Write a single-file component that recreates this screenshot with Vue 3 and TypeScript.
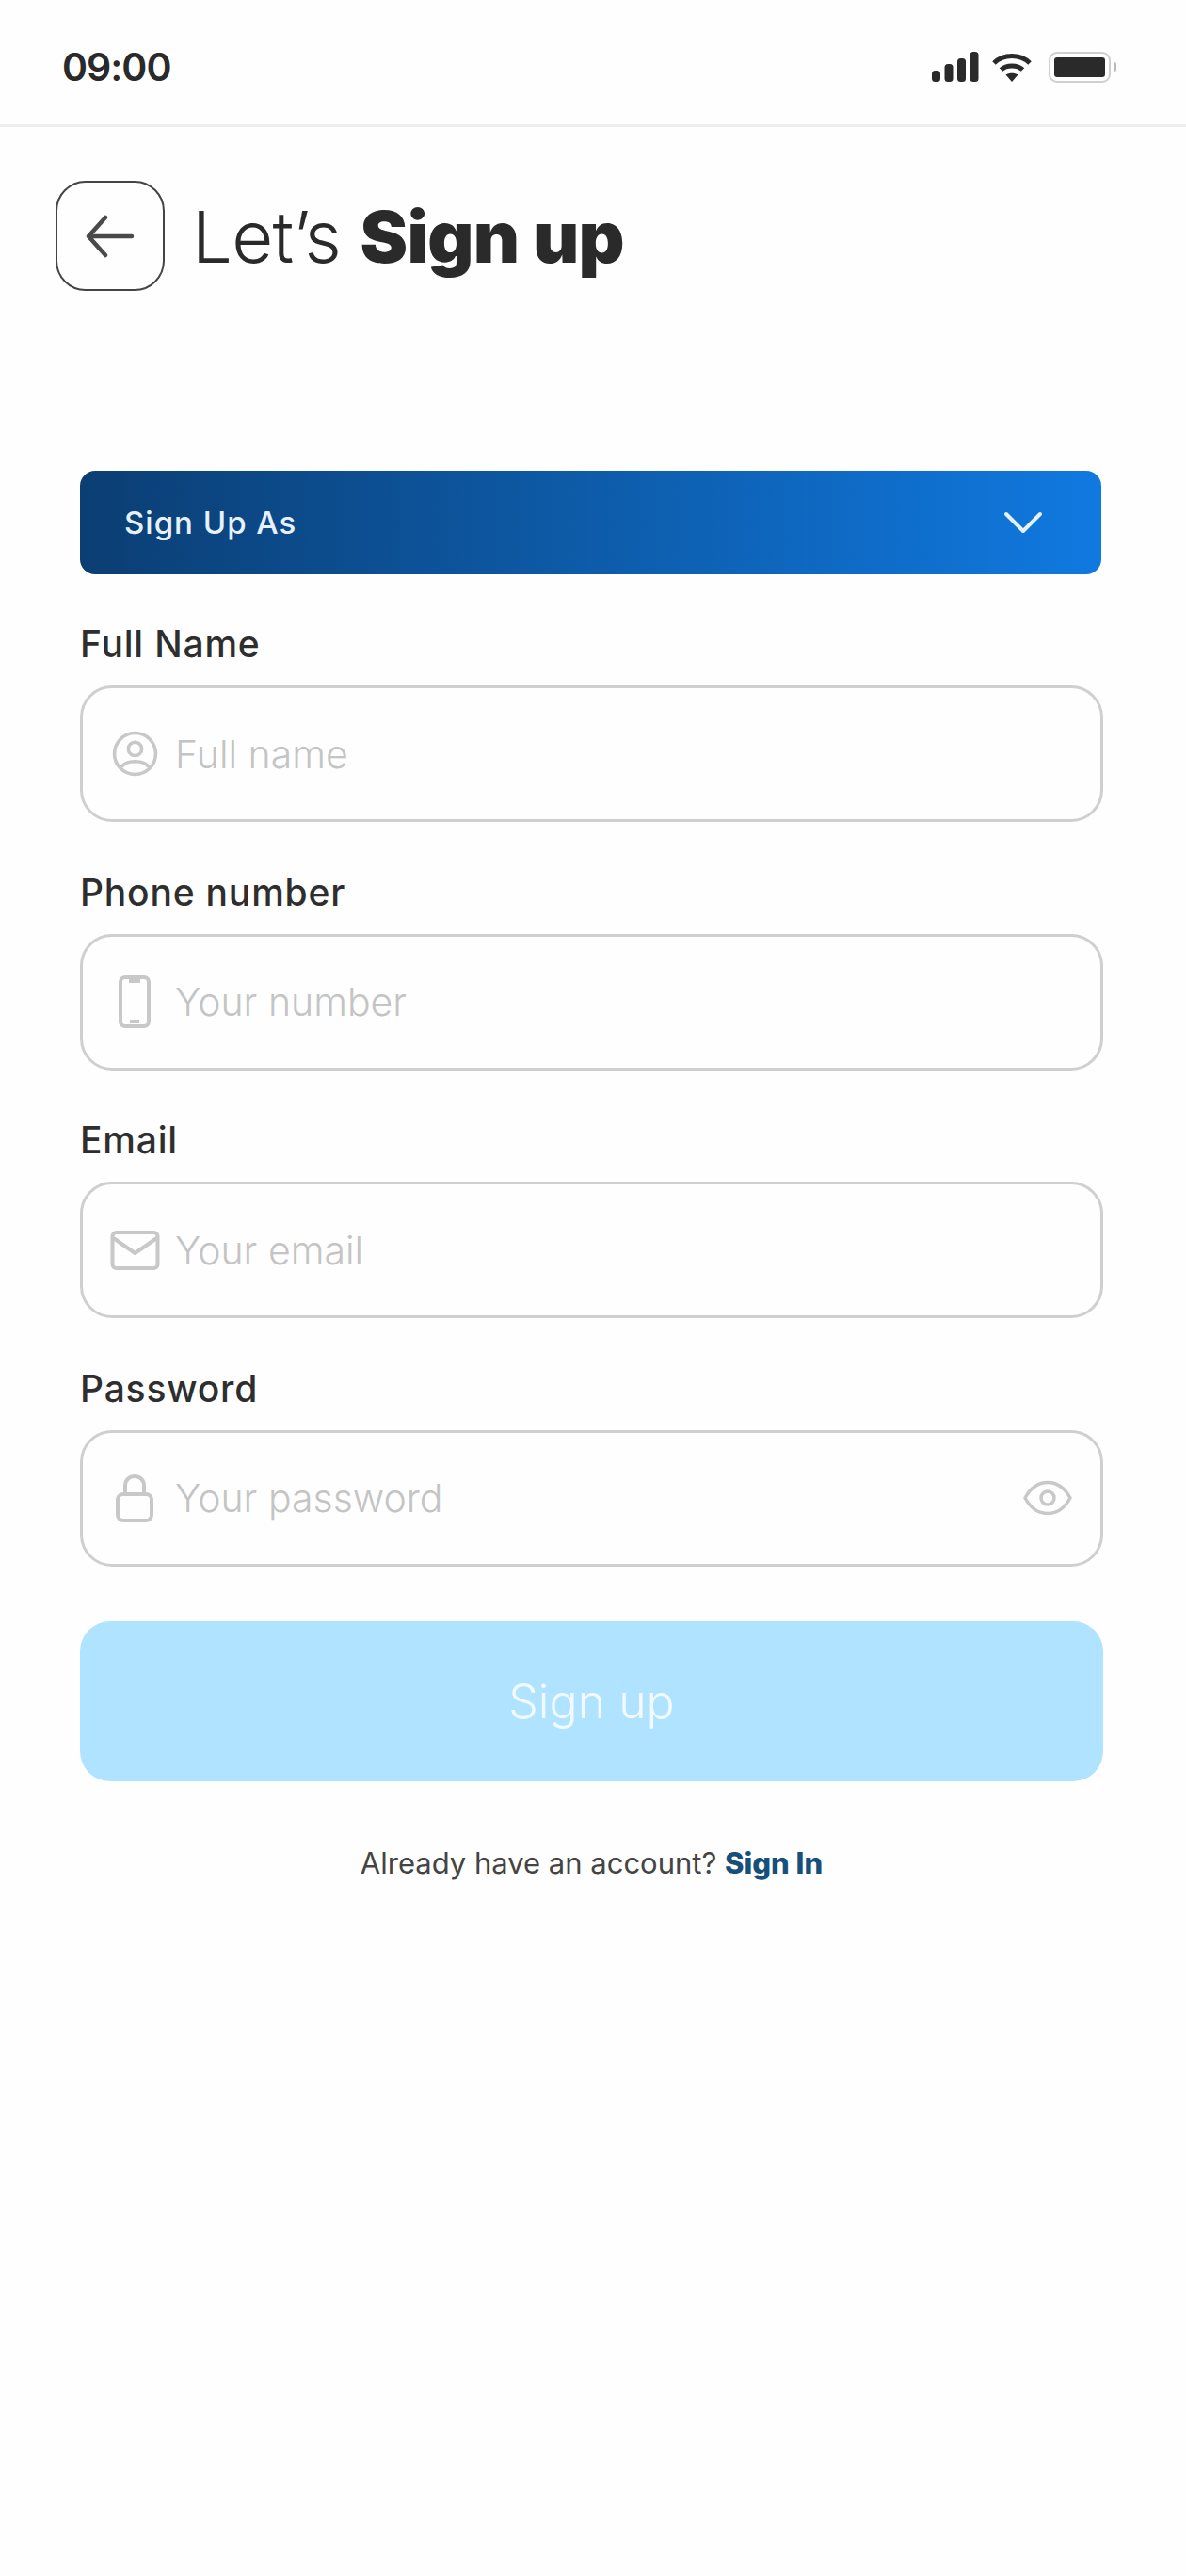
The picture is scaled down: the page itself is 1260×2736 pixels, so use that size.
<script setup lang="ts">
interface Field { label: string; placeholder: string; icon: string; eye?: boolean }
const fields: Field[] = [
  { label: 'Full Name', placeholder: 'Full name', icon: 'user' },
  { label: 'Phone number', placeholder: 'Your number', icon: 'phone' },
  { label: 'Email', placeholder: 'Your email', icon: 'mail' },
  { label: 'Password', placeholder: 'Your password', icon: 'lock', eye: true },
]
</script>

<template>
  <div class="page">
    <header class="status">
      <span class="time">09:00</span>
      <div class="status-icons">
        <svg width="50" height="34" viewBox="0 0 50 34" fill="#2a2a2a">
          <rect x="0" y="21" width="9" height="12" rx="3.5" />
          <rect x="13.5" y="14" width="9" height="19" rx="3.5" />
          <rect x="27" y="8" width="9" height="25" rx="3.5" />
          <rect x="40.500" y="1" width="9" height="32" rx="3.500" />
        </svg>
        <svg width="44" height="34" viewBox="0 0 44 34" fill="none" stroke="#2a2a2a" stroke-width="5">
          <path d="M3 13 C13 3 31 3 41 13" />
          <path d="M10.500 20 C16 14.500 28 14.500 33.500 20" />
          <path d="M22 33 L15.500 25.500 C19 23 25 23 28.500 25.500 Z" fill="#2a2a2a" stroke="none" />
        </svg>
        <div class="battery"><div class="battery-fill"></div></div>
        <div class="battery-cap"></div>
      </div>
    </header>

    <div class="title-row">
      <button class="back" type="button" aria-label="Back">
        <svg width="52" height="48" viewBox="0 0 52 48" fill="none" stroke="#4a4a4a" stroke-width="4.500" stroke-linecap="round" stroke-linejoin="round">
          <path d="M49 24 H4 M21 4 L3 24 L21 44" />
        </svg>
      </button>
      <h1 class="title">Let’s <strong>Sign up</strong></h1>
    </div>

    <form class="form" @submit.prevent>
      <div class="select">
        <span>Sign Up As</span>
        <svg width="42" height="26" viewBox="0 0 42 26" fill="none" stroke="#e6f1fb" stroke-width="4" stroke-linecap="round" stroke-linejoin="round">
          <path d="M3 4 L21 22 L39 4" />
        </svg>
      </div>

      <div v-for="f in fields" :key="f.label" class="field">
        <label class="label">{{ f.label }}</label>
        <div class="input">
          <div class="icon-slot">
            <svg v-if="f.icon === 'user'" width="49" height="49" viewBox="0 0 48 48" fill="none" stroke="#c8c8c8" stroke-width="3.500">
              <circle cx="24" cy="24" r="21.500" />
              <circle cx="24" cy="19" r="7" />
              <path d="M10 38 C14 30 34 30 38 38" />
            </svg>
            <svg v-else-if="f.icon === 'phone'" width="36" height="56" viewBox="0 0 36 56" fill="none" stroke="#c8c8c8" stroke-width="4" stroke-linejoin="round">
              <rect x="3" y="2" width="30" height="52" rx="5" />
              <path d="M12 6 H24 M13 49 H23" />
            </svg>
            <svg v-else-if="f.icon === 'mail'" width="53" height="42" viewBox="0 0 52 42" fill="none" stroke="#c8c8c8" stroke-width="4" stroke-linejoin="round">
              <rect x="2" y="2" width="48" height="38" rx="4" />
              <path d="M3 8 L26 24 L49 8" />
            </svg>
            <svg v-else width="42" height="52" viewBox="0 0 42 52" fill="none" stroke="#c8c8c8" stroke-width="4" stroke-linejoin="round">
              <rect x="3" y="22" width="36" height="28" rx="6" />
              <path d="M11 22 V13 C11 -0.500 31 -0.500 31 13 V22" />
            </svg>
          </div>
          <span class="placeholder">{{ f.placeholder }}</span>
          <svg v-if="f.eye" class="eye" width="52" height="40" viewBox="0 0 52 40" fill="none" stroke="#c8c8c8" stroke-width="3.500">
            <path d="M2 20 C14 -2 38 -2 50 20 C38 42 14 42 2 20 Z" />
            <circle cx="26" cy="20" r="7" />
          </svg>
        </div>
      </div>

      <button class="submit" type="submit">Sign up</button>
      <p class="foot">Already have an account? <a class="link">Sign In</a></p>
    </form>
  </div>
</template>

<style>
html, body { margin: 0; background: #fefefe; }
</style>

<style scoped>
.page {
  width: 1260px;
  height: 2736px;
  background: #fefefe;
  font-family: Inter, "Noto Sans", sans-serif;
  color: #2a2a2a;
  overflow: hidden;
}
.status {
  border-bottom: 3px solid #eeeeee;
  display: flex;
  align-items: center;
  justify-content: space-between;
  padding: 24px 74px 0 66px;
  height: 108px;
}
.time { font-size: 41px; font-weight: 600; line-height: 1; letter-spacing: -1px; margin-top: -14px; }
.status-icons { display: flex; align-items: center; gap: 13px; margin-top: -14px; }
.battery {
  width: 66px;
  height: 33px;
  box-sizing: border-box;
  border: 2px solid #cfcfcf;
  border-radius: 9px;
  padding: 4px;
  margin-left: 4px;
}
.battery-fill { width: 100%; height: 100%; background: #2a2a2a; border-radius: 3px; }
.battery-cap { width: 3px; height: 10px; background: #bbb; margin-left: -10px; border-radius: 0 2px 2px 0; }

.title-row { display: flex; align-items: center; gap: 29px; padding: 57px 0 0 59px; }
.back {
  width: 116px;
  height: 117px;
  box-sizing: border-box;
  border: 2px solid #444;
  border-radius: 32px;
  background: transparent;
  display: flex;
  align-items: center;
  justify-content: center;
  padding: 0;
}
.title { margin: 0; font-size: 76px; font-weight: 300; letter-spacing: -0.7px; line-height: 1; }
.title strong { font-weight: 900; }

.form { padding: 191px 88px 0 85px; display: flex; flex-direction: column; }
.select {
  height: 110px;
  border-radius: 16px;
  background: linear-gradient(90deg, #0b3e73, #1079e0);
  display: flex;
  align-items: center;
  justify-content: space-between;
  padding: 0 62px 0 47px;
  color: #e6f1fb;
  font-size: 33px;
  font-weight: 500;
  letter-spacing: 1px;
  margin-right: 2px;
}
.field { display: flex; flex-direction: column; }
.label { font-size: 39px; font-weight: 500; letter-spacing: 0.8px; line-height: 44px; margin-top: 52.500px; margin-bottom: 22px; color: #2e2e2e; }
.select + .field .label { margin-top: 52px; }
.input {
  height: 145px;
  box-sizing: border-box;
  border: 3px solid #cfcfcf;
  border-radius: 34px;
  display: flex;
  align-items: center;
  padding: 0 30px 0 0;
}
.icon-slot { width: 103px; flex: none; display: flex; justify-content: center; padding: 0 20px 0 27px; box-sizing: border-box; }
.placeholder { font-size: 41px; font-weight: 300; color: #c4c4c4; flex: 1; margin-left: -5px; }
.eye { flex: none; }
.submit {
  margin-top: 58px;
  height: 170px;
  border: 0;
  border-radius: 32px;
  background: #b0e3ff;
  color: #f2faff;
  font-family: inherit;
  font-size: 50px;
  font-weight: 300;
}
.foot { margin: 69px 0 0; text-align: center; font-size: 31px; line-height: 36px; color: #444; }
.link { font-weight: 800; color: #16507a; }
</style>
